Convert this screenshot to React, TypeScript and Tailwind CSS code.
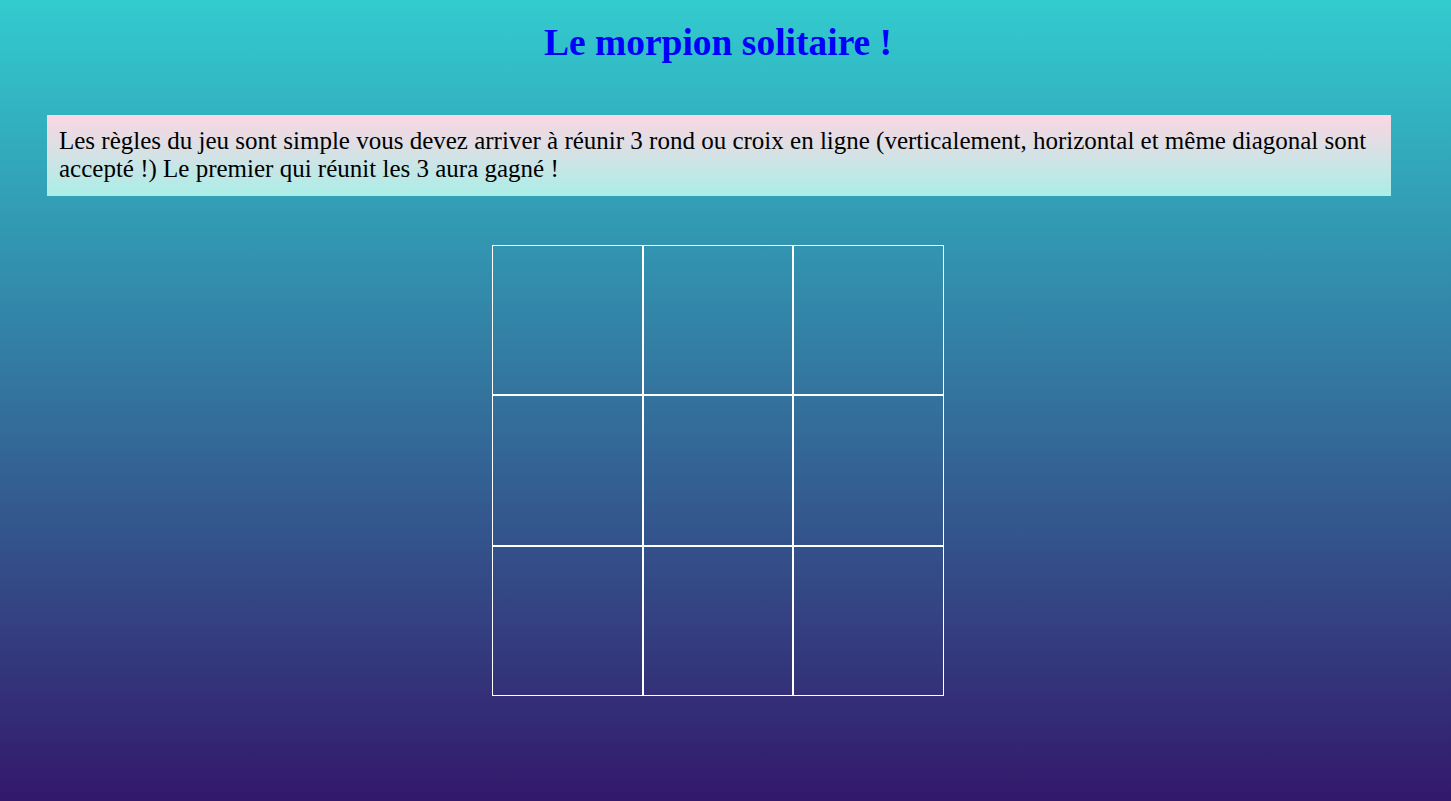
export default function App() {
  const cells = Array.from({ length: 9 });
  return (
    <main className="min-h-screen w-full bg-linear-to-b/srgb from-[#32cccf] to-[#34186b] font-['Liberation_Serif',serif]">
      <div className="w-[1436px] pb-[20px]">
        <h1 className="pt-[21px] text-center text-[37.5px] font-bold leading-[44px] text-[#0000ff]">
          Le morpion solitaire !
        </h1>
        <div className="ml-[47px] mr-[45px] mt-[50px] bg-linear-to-b/srgb from-[#fcd6e3] to-[#aaeee7] px-[12px] pt-[12px] pb-[13px]">
          <p className="text-[25px] leading-[28px] text-black">
            Les règles du jeu sont simple vous devez arriver à réunir 3 rond ou croix en ligne
            (verticalement, horizontal et même diagonal sont accepté !) Le premier qui réunit les 3
            aura gagné !
          </p>
        </div>
        <div className="mx-auto mt-[49px] grid h-[451px] w-[452px] grid-cols-3 grid-rows-3">
          {cells.map((_, i) => (
            <div key={i} className="border border-white" />
          ))}
        </div>
      </div>
    </main>
  );
}
